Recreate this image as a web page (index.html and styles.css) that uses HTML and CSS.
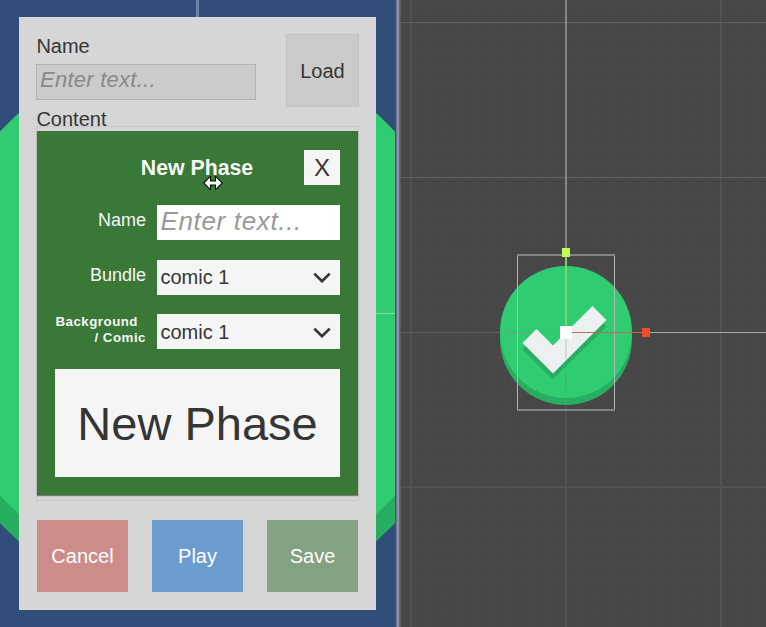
FILE: index.html
```html
<!DOCTYPE html>
<html lang="en">
<head>
<meta charset="utf-8">
<title>New Phase</title>
<link rel="stylesheet" href="styles.css">
</head>
<body>
<main class="editor">
  <section class="game">
    <svg class="backdrop" viewBox="0 0 395 627" aria-hidden="true">
      <circle cx="197.5" cy="341" r="268.5" fill="#28ae60"/>
      <circle cx="197.5" cy="313.500" r="268.5" fill="#2fcc71"/>
      <path d="M197.5 0V20" stroke="#7184a4" stroke-width="3"/>
      <path d="M376 313.5H395" stroke="#82e0aa"/>
    </svg>
    <div class="dialog">
      <header class="top">
        <div class="top-fields">
          <div class="label">Name</div>
          <div class="input name-input"><span>Enter text...</span></div>
          <div class="label content-label">Content</div>
        </div>
        <button class="load"><span>Load</span></button>
      </header>
      <div class="content">
        <div class="phase">
          <div class="phase-head"><h2>New Phase</h2><button class="close"><span>X</span></button></div>
          <div class="row"><label>Name</label><div class="field placeholder"><span>Enter text...</span></div></div>
          <div class="row"><label>Bundle</label><div class="field choice"><span>comic 1</span><svg class="chevron" viewBox="0 0 18 11"><path d="M1.3 1.6 9 9.2 16.7 1.6"/></svg></div></div>
          <div class="row"><label class="small"><span class="line-one">Background</span><span>/ Comic</span></label><div class="field choice"><span>comic 1</span><svg class="chevron" viewBox="0 0 18 11"><path d="M1.3 1.6 9 9.2 16.7 1.6"/></svg></div></div>
          <button class="new-phase"><span>New Phase</span></button>
        </div>
      </div>
      <footer class="actions">
        <button class="cancel"><span>Cancel</span></button>
        <button class="play"><span>Play</span></button>
        <button class="save"><span>Save</span></button>
      </footer>
    </div>
    <svg class="cursor" viewBox="0 0 20 14" aria-hidden="true"><path d="M1.5 7 7 1.5V5.5H13V1.5L18.5 7 13 12.5V8.5H7V12.5Z"/></svg>
  </section>
  <div class="splitter"></div>
  <section class="scene">
    <svg viewBox="401 0 365 627" aria-hidden="true">
      <defs><pattern id="minor" x="566" y="332.5" width="15.5" height="15.5" patternUnits="userSpaceOnUse"><path d="M0 .5H15.5M.5 0V15.5" stroke="#494949" fill="none"/></pattern></defs>
      <rect x="401" width="365" height="627" fill="#474747"/>
      <rect x="401" width="365" height="627" fill="url(#minor)"/>
      <path d="M411 0V627M566 332V627M721 0V627M401 487H766" stroke="#525252" stroke-width="2"/>
      <path d="M401 22.5H766M401 177.5H766M401 332.5H566" stroke="#606060"/>
      <path d="M566 0V253" stroke="#858585" stroke-width="2"/>
      <path d="M632 332.5H766" stroke="#aaa"/>
      <circle cx="566" cy="339" r="66" fill="#28ae60"/>
      <circle cx="566" cy="332" r="66" fill="#2fcc71"/>
      <path d="M522.5 349.5 536.5 336 553 352 592.5 313 606.5 326.5 552.5 379.5Z" fill="#28ae60"/>
      <path d="M522.5 343 536.5 329 553 345.5 592.5 306 606.5 320 553 373.5Z" fill="#ecf0f1"/>
      <path d="M500 332.5H532M541 332.5H560" stroke="#5f9d78" stroke-dasharray="1 1"/>
      <path d="M566 338V359" stroke="#d3d9d8" stroke-width="2"/>
      <path d="M566 370V405" stroke="#48a66b" stroke-dasharray="2 1"/>
      <path d="M517.5 255V410M614.5 255V410" stroke="#b5b5b5"/>
      <path d="M517 255H615M517 410H615" stroke="#858585" stroke-width="2"/>
      <path d="M566 257V332" stroke="#7bd36a" stroke-width="2"/>
      <path d="M566 332.5H642" stroke="#b66d50"/>
      <rect x="562" y="248" width="8" height="9" fill="#bfff54"/>
      <rect x="642" y="328" width="8" height="9" fill="#f04c27"/>
      <rect x="560" y="326" width="12" height="13" fill="#fff"/>
    </svg>
  </section>
</main>
</body>
</html>
```
FILE: styles.css
```css
* { box-sizing: border-box; }
body { margin: 0; font-family: "Liberation Sans", Arial, sans-serif; color: #353535; }
button { border: 0; padding: 0; font: inherit; color: inherit; display: flex; align-items: center; justify-content: center; }
.editor { display: flex; width: 766px; height: 627px; overflow: hidden; }
.game { position: relative; width: 395px; height: 627px; background: #314d79; padding: 17px 19px; }
.backdrop { position: absolute; inset: 0; width: 395px; height: 627px; }
.dialog { position: relative; width: 357px; height: 593px; padding: 17px 17px 18px; background: #d6d6d6; display: flex; flex-direction: column; }
.top { display: flex; justify-content: space-between; height: 92px; }
.top-fields { width: 220px; }
.label { font-size: 20px; line-height: 25px; height: 30px; padding-left: .4px; }
.input { width: 220px; height: 36px; border: 1px solid #b3b3b3; background: #cbcbcb; color: #898989; font-size: 22px; font-style: italic; line-height: 29px; padding-left: 3px; letter-spacing: .25px; }
.content-label { margin-top: 7px; }
.load { width: 73px; height: 73px; background: #cbcbcb; border: 1px solid #c1c1c1; font-size: 20px; padding-top: 2px; }
.content { height: 375px; border: 1px solid #c8c8c8; padding-top: 4px; }
.phase { width: 321px; height: 364px; background: #397837; padding: 19px 18px 18px; display: flex; flex-direction: column; box-shadow: 0 1px 1px #777; color: #f7f7f7; }
.phase-head { display: grid; grid-template-columns: 1fr 36px; height: 55px; }
h2 { margin: 0 0 0 35px; text-align: center; font-size: 21.3px; line-height: 36px; }
.close { width: 36px; height: 35px; background: #f5f5f5; color: #353535; font-size: 24px; }
.row { display: grid; grid-template-columns: 91px 183px; justify-content: space-between; height: 55px; }
.row label { font-size: 18px; line-height: 30px; text-align: right; }
.row .small { font-size: 13.3px; font-weight: bold; line-height: 16px; display: flex; flex-direction: column; align-items: flex-end; white-space: nowrap; letter-spacing: .5px; }
.line-one { margin-right: 8px; }
.field { height: 35px; background: #f5f5f5; color: #353535; font-size: 20px; display: flex; align-items: center; justify-content: space-between; padding: 0 9px 0 3.500px; }
.choice { padding-top: 1px; }
.placeholder { background: #fff; color: #999; font-size: 26px; font-style: italic; letter-spacing: .65px; padding-bottom: 1px; }
.chevron { width: 18px; height: 11px; }
.chevron path { fill: none; stroke: #353535; stroke-width: 2.7; }
.new-phase { height: 108px; flex: none; background: #f5f5f5; color: #353535; font-size: 47px; }
.actions { display: flex; justify-content: space-between; margin-top: 19px; height: 72px; padding: 0 1px; color: #fff; font-size: 20px; }
.actions button { width: 91px; height: 72px; }
.cancel { background: #cb8c8a; }
.play { background: #6b9ccd; }
.save { background: #84a182; }
.cursor { position: absolute; left: 203px; top: 176px; width: 20px; height: 14px; }
.cursor path { fill: #fff; stroke: #000; stroke-width: 2; paint-order: stroke; }
.splitter { width: 6px; height: 627px; background: linear-gradient(90deg, #47536b 0 1px, #6e7490 1px 2px, #8e8fad 2px 4px, #686870 4px 5px, #5b5b5d 5px); }
.scene { width: 365px; height: 627px; }
.scene svg { display: block; width: 365px; height: 627px; }
```
